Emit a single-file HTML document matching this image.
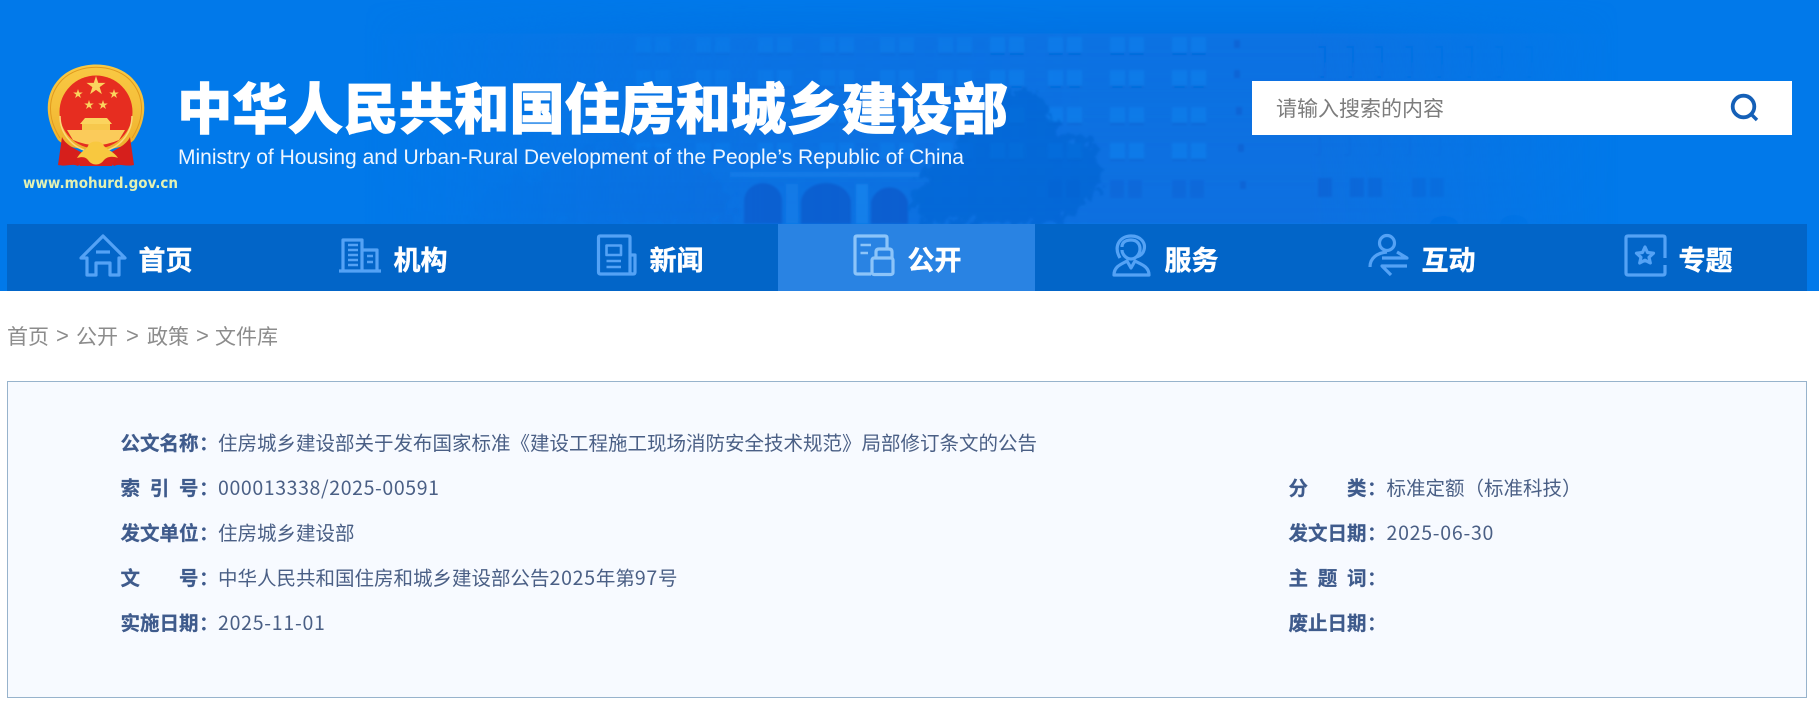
<!DOCTYPE html>
<html lang="zh-CN">
<head>
<meta charset="utf-8">
<title>公文名称</title>
<style>
html,body{margin:0;padding:0;background:#fff;}
body{width:1819px;height:715px;position:relative;overflow:hidden;font-family:"Noto Sans CJK SC","Liberation Sans",sans-serif;}
.a{position:absolute;white-space:nowrap;}
#hdr{position:absolute;left:0;top:0;width:1819px;height:291px;background:#0179ea;}
#nav{position:absolute;left:7px;top:224px;width:1800px;height:67px;background:#0265c8;}
#act{position:absolute;left:778px;top:224px;width:257px;height:67px;background:#2983e3;}
.n{position:absolute;top:241px;height:36px;line-height:36px;font-size:27px;font-weight:700;color:#fff;white-space:nowrap;-webkit-text-stroke:.4px #fff;}
#title{left:177px;top:65px;line-height:80px;font-size:55.4px;font-weight:900;color:#fff;-webkit-text-stroke:.7px #fff;}
#search{position:absolute;left:1252px;top:81px;width:540px;height:54px;background:#fff;}
#ph{left:1276px;top:91px;line-height:34px;font-size:21px;color:#7c7c7c;}
.bc{top:320px;line-height:32px;font-size:21px;color:#8c8c8c;}
.gt{font-family:"Liberation Sans",sans-serif;font-size:22px;}
#card{position:absolute;left:7px;top:381px;width:1798px;height:315px;border:1px solid #97b3cc;background:#f7faff;}
.k,.v{position:absolute;line-height:30px;font-size:19.5px;white-space:nowrap;}
.k{font-weight:700;color:#3f5b8c;width:78px;text-align:justify;text-align-last:justify;-webkit-text-stroke:.25px #3f5b8c;}
.c{position:absolute;line-height:30px;font-size:19.5px;font-weight:700;color:#3f5b8c;}
.v{color:#4a5f85;}
.d{letter-spacing:.75px;}
.d2{letter-spacing:.62px;}
</style>
</head>
<body>
<div id="hdr"></div>

<svg class="a" style="left:0;top:0" width="1819" height="291" viewBox="0 0 1819 291">
<defs>
<linearGradient id="fd" x1="0" x2="1819" y1="0" y2="0" gradientUnits="userSpaceOnUse">
<stop offset=".2" stop-color="#fff" stop-opacity="0"/>
<stop offset=".34" stop-color="#fff" stop-opacity=".6"/>
<stop offset=".42" stop-color="#fff" stop-opacity=".85"/>
<stop offset=".6" stop-color="#fff" stop-opacity="1"/>
<stop offset=".72" stop-color="#fff" stop-opacity="1"/>
<stop offset=".89" stop-color="#fff" stop-opacity="0"/>
</linearGradient>
<linearGradient id="vf" x1="0" x2="0" y1="0" y2="1">
<stop offset="0" stop-color="#0a70e0" stop-opacity="0"/>
<stop offset=".18" stop-color="#0a70e0" stop-opacity=".8"/>
<stop offset="1" stop-color="#0a70e0" stop-opacity="1"/>
</linearGradient>
<linearGradient id="gold" x1="0" x2="0" y1="0" y2="1">
<stop offset="0" stop-color="#f9c943"/><stop offset=".5" stop-color="#f5bf3a"/><stop offset="1" stop-color="#eeb02c"/>
</linearGradient>
<mask id="m" maskUnits="userSpaceOnUse" x="0" y="0" width="1819" height="291"><rect width="1819" height="291" fill="url(#fd)"/></mask>
<filter id="bl" x="-5%" y="-5%" width="110%" height="110%"><feGaussianBlur stdDeviation="1"/></filter>
<filter id="tr" x="-20%" y="-20%" width="140%" height="140%">
<feTurbulence type="fractalNoise" baseFrequency=".09" numOctaves="3" seed="4"/>
<feDisplacementMap in="SourceGraphic" scale="30" xChannelSelector="R" yChannelSelector="G"/>
<feGaussianBlur stdDeviation="1"/>
</filter>
<g id="wp">
<rect x="0" y="0" width="15" height="18" fill="#0c80ec"/>
<rect x="19" y="0" width="15" height="18" fill="#0c80ec"/>
<rect x="0" y="16" width="15" height="2" fill="#0663d0"/>
<rect x="19" y="16" width="15" height="2" fill="#0663d0"/>
</g>
<g id="wd">
<rect x="0" y="0" width="14" height="18" fill="#0765d6"/>
<rect x="18" y="0" width="14" height="18" fill="#0765d6"/>
</g>
<g id="col">
<use href="#wp" y="37"/><use href="#wp" y="70"/><use href="#wp" y="107"/><use href="#wp" y="143"/>
</g>
<polygon id="st" points="0,-1 .225,-.309 .951,-.309 .363,.118 .588,.809 0,.382 -.588,.809 -.363,.118 -.951,-.309 -.225,-.309"/>
</defs>

<g mask="url(#m)">
<g filter="url(#bl)">
<rect x="360" y="0" width="1280" height="224" fill="url(#vf)"/>
<g opacity=".45">
<use href="#col" x="636"/><use href="#col" x="696"/><use href="#col" x="758"/><use href="#col" x="820"/>
<use href="#col" x="880"/><use href="#col" x="938"/>
</g>
<g opacity=".62">
<use href="#col" x="990"/><use href="#col" x="1048"/>
<use href="#col" x="1110"/><use href="#col" x="1172"/>
<use href="#wd" x="1048" y="180"/><use href="#wd" x="1110" y="180"/><use href="#wd" x="1172" y="180"/>
</g>
<rect x="1234" y="40" width="6" height="8" fill="#0765d6"/><rect x="1234" y="70" width="6" height="8" fill="#0765d6"/>
<rect x="1236" y="107" width="6" height="8" fill="#0765d6"/><rect x="1238" y="144" width="6" height="8" fill="#0765d6"/>
<rect x="1240" y="181" width="6" height="8" fill="#0765d6"/>
<rect x="1318" y="178" width="14" height="19" fill="#0765d6"/><rect x="1350" y="178" width="14" height="19" fill="#0765d6"/>
<rect x="1368" y="178" width="14" height="19" fill="#0765d6"/><rect x="1412" y="178" width="14" height="19" fill="#0765d6"/>
<rect x="1430" y="178" width="14" height="19" fill="#0765d6"/>
<g opacity=".6">
<path d="M1318 47h7v30h-7M1346 47h7v30h-7M1375 47h7v30h-7M1405 47h7v30h-7M1435 47h7v30h-7M1465 47h7v30h-7M1495 47h7v30h-7M1525 47h7v30h-7" fill="none" stroke="#0668dc" stroke-width="2"/>
<path d="M1320 137v18h-6M1350 137v18h-6M1380 137v18h-6M1410 137v18h-6M1440 137v18h-6M1470 137v18h-6M1500 137v18h-6M1530 137v18h-6" fill="none" stroke="#0668dc" stroke-width="2"/>
</g>
<rect x="730" y="172" width="190" height="5" fill="#1a82ea" opacity=".6"/>
<path d="M744 224V201a19 18 0 0 1 38 0V224Z M801 224V203a25 20 0 0 1 50 0V224Z M871 224V202a19 19 0 0 1 37 0V224Z" fill="#0a5bcd"/>
<rect x="786" y="184" width="12" height="40" fill="#1b82ea" opacity=".6"/>
<rect x="856" y="184" width="12" height="40" fill="#1b88ee" opacity=".7"/>
<path d="M1500 224a14 9 0 0 1 28 0ZM1430 224a14 8 0 0 1 28 0Z" fill="#0668dc"/>
</g>
<path filter="url(#tr)" d="M915 224C905 190 925 160 955 150C965 120 990 95 1020 90C1050 95 1055 125 1060 135C1090 135 1110 160 1100 190C1085 205 1070 215 1060 224Z" fill="#0663d0" opacity=".62"/>
<path filter="url(#tr)" d="M470 224C470 195 500 175 540 180C560 150 610 135 650 150C690 160 730 175 735 224Z" fill="#0868d8" opacity=".4"/>
</g>

<!-- crest -->
<path d="M58 140C44 118 44 94 60 78C78 60 114 60 132 78C148 94 148 118 134 140C122 153 70 153 58 140Z" fill="url(#gold)"/>
<path d="M60 138C47 118 47 96 62 80C79 63 113 63 130 80C145 96 145 118 132 138" fill="none" stroke="#e09a1e" stroke-width="1"/>
<circle cx="96" cy="112" r="36.500" fill="#e62d20"/>
<path d="M60 116a36 36 0 0 0 72 0" fill="none" stroke="#fbd97a" stroke-width="1.500"/>
<g fill="#fbd45e">
<use href="#st" transform="translate(96 86) scale(10)"/>
<use href="#st" transform="translate(78 94) scale(5)"/>
<use href="#st" transform="translate(114 94) scale(5)"/>
<use href="#st" transform="translate(89 105) scale(5)"/>
<use href="#st" transform="translate(103 105) scale(5)"/>
<path d="M85 118H107L112 124H80Z"/>
<rect x="82" y="124" width="28" height="6" fill="#f7c84c"/>
<path d="M67 130H125L119 140Q96 150 73 140Z" fill="#fbcb5a"/>
</g>
<path d="M62 137C66 146 78 150 88 156L78 166C72 163 66 167 58 165Z" fill="#d61f1c"/>
<path d="M130 137C126 146 114 150 104 156L114 166C120 163 126 167 134 165Z" fill="#d61f1c"/>
<path d="M74 154C84 160 108 160 118 154L112 166H80Z" fill="#d8211d"/>
<path d="M77 158C82 150 86 150 88 146C90 140 102 140 104 146C108 150 114 152 118 158C110 155 106 158 104 160C100 166 92 166 88 160C86 158 84 156 77 158Z" fill="#f8c83f"/>
<text x="23" y="188" font-family="'DejaVu Sans',sans-serif" font-weight="700" font-size="15" fill="#e2f1b4" textLength="155" lengthAdjust="spacingAndGlyphs">www.mohurd.gov.cn</text>
<text x="178" y="164" font-family="'Liberation Sans',sans-serif" font-size="21" fill="#eef6ff" textLength="786" lengthAdjust="spacingAndGlyphs">Ministry of Housing and Urban-Rural Development of the People’s Republic of China</text>
</svg>

<div class="a" id="title">中华人民共和国住房和城乡建设部</div>
<div id="search"></div>
<div class="a" id="ph">请输入搜索的内容</div>
<div id="nav"></div>
<div id="act"></div>

<svg class="a" style="left:0;top:0" width="1819" height="291" viewBox="0 0 1819 291" fill="none">
<!-- search -->
<circle cx="1743.500" cy="106.500" r="10.800" stroke="#1560b7" stroke-width="3.800"/>
<path d="M1751 114l6 6" stroke="#1560b7" stroke-width="3.400"/>

<g stroke="#54a2f5" stroke-width="3.200" stroke-linejoin="round">
<!-- home -->
<path d="M87 258H81L103 236L125 258H119V275H110V263H96V275H87Z"/>
<path d="M96 252H110"/>
<!-- building -->
<path d="M339 271H381M343 271V240H362V271M363 250H377V271"/>
<path d="M348 245H358M348 250H358M348 255H358M348 260H358M348 265H358M367 256H373M367 262H373" stroke-width="2.400"/>
<!-- news -->
<path d="M630 255V237.500Q630 236 628 236H600Q598.500 236 598.500 238V272Q598.500 274 600.500 274H633Q635 274 635 272V255H630V272Q630 274 633 274"/>
<path d="M606.500 245.500H621V255H606.500ZM606.500 261H621M606.500 267H621" stroke-width="2.600"/>
<!-- service -->
<path d="M1114 275C1114 266 1122 264 1127 261L1131 268L1135 261C1140 264 1149 266 1149 275Z"/>
<path d="M1122 247C1122 242 1126 240 1131 240C1137 240 1140 244 1140 249C1140 254 1136 259 1131 259C1126 259 1122 254 1122 250"/>
<path d="M1120 258C1113 246 1120 236 1131 236C1141 236 1146 243 1144 250C1143 254 1140 256 1136 257"/>
<!-- interact -->
<circle cx="1387" cy="243" r="7.500"/>
<path d="M1370 267C1370 258 1377 253 1387 252"/>
<path d="M1382 258H1407L1397 252M1407 266H1382L1391 275"/>
<!-- topic -->
<path d="M1665 258V238Q1665 236 1663 236H1628Q1626 236 1626 238V273Q1626 275 1628 275H1663Q1665 275 1665 273V265"/>
<path d="M1645 247L1647.500 252.500L1653.500 253.200L1649 257.300L1650.300 263L1645 260.200L1639.700 263L1641 257.300L1636.500 253.200L1642.500 252.500Z"/>
</g>
<g stroke="#8cc4f9" stroke-width="3.200" stroke-linejoin="round">
<!-- open -->
<path d="M887 250V238Q887 236 885 236H857Q855 236 855 238V272Q855 274 857 274H871"/>
<path d="M860.500 245H871M860.500 253H868" stroke-width="2.600"/>
<rect x="872" y="258" width="21" height="16.500" rx="2"/>
<path d="M876 258V252Q876 249 879 249H889Q892 249 892 252V258"/>
</g>
</svg>

<div class="n" style="left:138.500px">首页</div>
<div class="n" style="left:393.500px">机构</div>
<div class="n" style="left:649.500px">新闻</div>
<div class="n" style="left:907.500px">公开</div>
<div class="n" style="left:1164.500px">服务</div>
<div class="n" style="left:1421.500px">互动</div>
<div class="n" style="left:1678.500px">专题</div>

<div class="a bc" style="left:7px">首页</div>
<div class="a bc gt" style="left:56px">&gt;</div>
<div class="a bc" style="left:76px">公开</div>
<div class="a bc gt" style="left:126px">&gt;</div>
<div class="a bc" style="left:147px">政策</div>
<div class="a bc gt" style="left:196px">&gt;</div>
<div class="a bc" style="left:215px">文件库</div>

<div id="card"></div>

<div class="k" style="left:120.500px;top:427px">公文名称</div><div class="c" style="left:199px;top:427px">：</div>
<div class="v" style="left:218px;top:427px">住房城乡建设部关于发布国家标准《建设工程施工现场消防安全技术规范》局部修订条文的公告</div>

<div class="k" style="left:120.500px;top:472px">索 引 号</div><div class="c" style="left:199px;top:472px">：</div>
<div class="v d2" style="left:218px;top:472px">000013338/2025-00591</div>

<div class="k" style="left:120.500px;top:517px">发文单位</div><div class="c" style="left:199px;top:517px">：</div>
<div class="v" style="left:218px;top:517px">住房城乡建设部</div>

<div class="k" style="left:120.500px;top:562px">文 号</div><div class="c" style="left:199px;top:562px">：</div>
<div class="v" style="left:218px;top:562px">中华人民共和国住房和城乡建设部公告<span class="d">2025</span>年第<span class="d">97</span>号</div>

<div class="k" style="left:120.500px;top:607px">实施日期</div><div class="c" style="left:199px;top:607px">：</div>
<div class="v d" style="left:218px;top:607px">2025-11-01</div>

<div class="k" style="left:1288.500px;top:472px">分 类</div><div class="c" style="left:1367px;top:472px">：</div>
<div class="v" style="left:1386.500px;top:472px">标准定额（标准科技）</div>

<div class="k" style="left:1288.500px;top:517px">发文日期</div><div class="c" style="left:1367px;top:517px">：</div>
<div class="v d" style="left:1386.500px;top:517px">2025-06-30</div>

<div class="k" style="left:1288.500px;top:562px">主 题 词</div><div class="c" style="left:1367px;top:562px">：</div>

<div class="k" style="left:1288.500px;top:607px">废止日期</div><div class="c" style="left:1367px;top:607px">：</div>
</body>
</html>
